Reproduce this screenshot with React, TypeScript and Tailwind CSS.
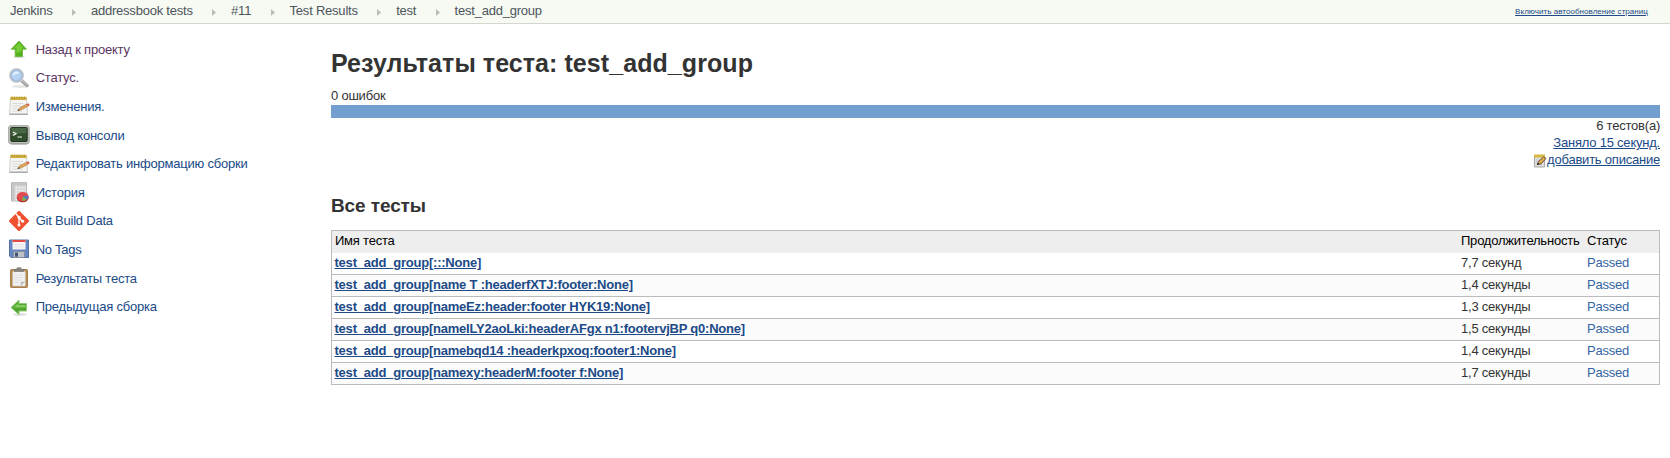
import React from 'react';

const crumbs = ['Jenkins', 'addressbook tests', '#11', 'Test Results', 'test', 'test_add_group'];

function ArrowUp() {
  return (
    <svg width="22" height="22" viewBox="0 0 22 22">
      <ellipse cx="11" cy="19" rx="6" ry="1.2" fill="#ddd" />
      <path d="M11 3 18.500 11.200H14.500V18.500H7.200V11.200H3.200Z" fill="#55b31f" stroke="#63b236" strokeWidth=".8" />
      <path d="M11 5 15.500 10.200H13.500V13L8.500 15V10.200H6Z" fill="#8bdc47" opacity=".65" />
    </svg>
  );
}

function ArrowLeft() {
  return (
    <svg width="22" height="22" viewBox="0 0 22 22">
      <ellipse cx="12" cy="18.500" rx="7" ry="1.300" fill="#ddd" />
      <path d="M3 11.500 11 4V7.500H18.500V15H11V18.500Z" fill="#4fa52f" stroke="#8fca73" />
      <path d="M5.500 11.500 10.300 7V9H17.500V11.500Z" fill="#84ce5d" />
    </svg>
  );
}

function Search() {
  return (
    <svg width="22" height="22" viewBox="0 0 22 22">
      <ellipse cx="12" cy="19.500" rx="8" ry="1.500" fill="#e6e6e6" />
      <path d="m13.500 13.500 5.500 5" stroke="#a5a5a5" strokeWidth="3.600" strokeLinecap="round" />
      <path d="m14 13 5 4.500" stroke="#ccc" strokeWidth="1" strokeLinecap="round" />
      <circle cx="8.500" cy="8.500" r="6.500" fill="#b3d0f3" stroke="#c6cace" strokeWidth="2" />
      <circle cx="8.500" cy="8.500" r="5.500" fill="none" stroke="#8aa9cf" strokeWidth=".8" />
      <path d="M4.500 9Q5 4.700 9 4.500Q11 5 11.500 6.500Q7 6.500 4.500 9" fill="#e3effc" />
    </svg>
  );
}

function Notepad() {
  return (
    <svg width="22" height="22" viewBox="0 0 22 22">
      <path d="M2.500 3H18.500L19.500 19.500H1.500Z" fill="#f4f4f2" stroke="#c4c4c0" strokeWidth=".8" />
      <path d="M1.500 18.500H19.500V20H1.500Z" fill="#aaa" />
      <path d="M2.500 1.800H18.500V5H2.500Z" fill="#cfae3c" />
      <path d="M4 1.500V4M6.500 1.500V4M9 1.500V4M11.500 1.500V4M14 1.500V4M16.500 1.500V4" stroke="#a98d38" strokeWidth=".6" />
      <path d="M4.500 8.500H15M4.500 11H13M4.500 13.500H10M4.500 16H14" stroke="#d3d3d1" strokeWidth=".8" />
      <path d="m10 15.500 1.700-2.800 7.300-3.700 1.300 2-7.300 4Z" fill="#e5a652" stroke="#a98050" strokeWidth=".7" />
      <path d="m18.500 9.200 1.800-.9 1.400 1.700-1.600 1.200Z" fill="#d85b50" />
      <path d="m9.300 16 1.300-2 1.200 1.300Z" fill="#444" />
    </svg>
  );
}

function SmallNotepad() {
  return (
    <svg width="14" height="14" viewBox="0 0 14 14" className="mt-[3px] shrink-0">
      <path d="M1.500 2H11.500V13H1.500Z" fill="#dededc" stroke="#aaa9a3" />
      <path d="M1 .5H12V3.500H1Z" fill="#d8b83e" />
      <path d="M3 6H8M3 8H6M3 10.500H9" stroke="#c5c5c3" />
      <path d="m4.500 10.500 1-3 5-4.500 2.500 1.500-5 5.300Z" fill="#e5ad4e" stroke="#5b4b35" />
      <path d="m4 11 .8-2.300 1.700 1.300Z" fill="#222" />
    </svg>
  );
}

function Terminal() {
  return (
    <svg width="22" height="22" viewBox="0 0 22 22">
      <rect x=".7" y="1.700" width="20.500" height="18" rx="2" fill="#c0c2bc" stroke="#a0a29c" />
      <rect x="2.800" y="3.500" width="16.400" height="14" rx=".8" fill="#304d2c" stroke="#273525" />
      <path d="M3.500 4H18.500V9Q10 9 3.500 12Z" fill="#53704b" opacity=".7" />
      <path d="m5 8 3 1.700-3 1.700M9.500 13H14" stroke="#eef5e9" strokeWidth="1.200" fill="none" />
      <path d="M3 20H19" stroke="#999" />
    </svg>
  );
}

function History() {
  return (
    <svg width="22" height="22" viewBox="0 0 22 22">
      <path d="M3.500 1.700H18.500V20H3.500Z" fill="#eee" stroke="#b5b5b5" />
      <path d="M4 2H18V4.500H4ZM4 2H6.500V19.500H4Z" fill="#c7c7c7" />
      <path d="M4 5H18M4 8H18M4 11H18M4 14H18M4 17H18M7 2V19.500M10 2V19.500M13 2V19.500M16 2V19.500" stroke="#c2c2c2" strokeWidth=".6" />
      <ellipse cx="14.700" cy="16.600" rx="6" ry="4.700" fill="#b92828" />
      <ellipse cx="14.700" cy="15.500" rx="5.800" ry="4.500" fill="#e24b4b" />
      <path d="M14.700 15.500 20.300 14.500Q21 17 18.500 18.800Z" fill="#4b7fc4" />
      <path d="M14.700 15.500 18.500 18.800Q16.500 20.400 14.200 19.800Z" fill="#6fbb48" />
    </svg>
  );
}

function Git() {
  return (
    <svg width="22" height="22" viewBox="0 0 22 22">
      <rect x="3.500" y="3.500" width="15" height="15" rx="1.200" transform="rotate(45 11 11)" fill="#f05133" />
      <path d="M7.700 3.500 11 7.300V15M11 7.800 14.500 11.300" stroke="#fff" strokeWidth="1.300" fill="none" />
      <circle cx="11" cy="7.300" r="1.500" fill="#fff" />
      <circle cx="11" cy="15" r="1.500" fill="#fff" />
      <circle cx="14.700" cy="11.300" r="1.500" fill="#fff" />
    </svg>
  );
}

function Floppy() {
  return (
    <svg width="22" height="22" viewBox="0 0 22 22">
      <path d="M1.500 2H20.500V19.500H3L1.500 18Z" fill="#6587c2" stroke="#56739f" />
      <path d="M4.500 2H17.500V11.500H4.500Z" fill="#f5f5f5" />
      <path d="M4.500 2H17.500V4H4.500Z" fill="#e34a42" />
      <path d="M6 6.500H16M6 8.800H16" stroke="#dedede" strokeWidth=".8" />
      <path d="M5.500 13.500H16.500V19.500H5.500Z" fill="#bfc2c7" stroke="#7c8796" strokeWidth=".7" />
      <path d="M7 14.500H10V18.700H7Z" fill="#46577a" />
    </svg>
  );
}

function Clipboard() {
  return (
    <svg width="22" height="22" viewBox="0 0 22 22">
      <rect x="2.500" y="2.500" width="17" height="18" rx="1" fill="#b98a4b" stroke="#95703a" strokeWidth=".8" />
      <path d="M4.700 4.500H17.300V19H4.700Z" fill="#f1f1f1" stroke="#ccc" strokeWidth=".6" />
      <path d="M6.500 8H15M6.500 10.500H15M6.500 13H14M6.500 15.500H11" stroke="#dadada" strokeWidth=".8" />
      <path d="M17.300 14.500 12.800 19V15Z" fill="#bbb" />
      <path d="M6.500 4.500V2.500L9 2V.8H13V2L15.500 2.500V4.500Z" fill="#85857e" stroke="#75756f" strokeWidth=".6" />
    </svg>
  );
}

const tasks = [
  { label: 'Назад к проекту', icon: <ArrowUp />, color: 'text-[#5c3566]' },
  { label: 'Статус.', icon: <Search />, color: 'text-[#5c3566]' },
  { label: 'Изменения.', icon: <Notepad />, color: 'text-[#204a87]' },
  { label: 'Вывод консоли', icon: <Terminal />, color: 'text-[#204a87]' },
  { label: 'Редактировать информацию сборки', icon: <Notepad />, color: 'text-[#204a87]' },
  { label: 'История', icon: <History />, color: 'text-[#204a87]' },
  { label: 'Git Build Data', icon: <Git />, color: 'text-[#204a87]' },
  { label: 'No Tags', icon: <Floppy />, color: 'text-[#204a87]' },
  { label: 'Результаты теста', icon: <Clipboard />, color: 'text-[#204a87]' },
  { label: 'Предыдущая сборка', icon: <ArrowLeft />, color: 'text-[#204a87]' },
];

const tests = [
  ['test_add_group[:::None]', '7,7 секунд'],
  ['test_add_group[name T :headerfXTJ:footer:None]', '1,4 секунды'],
  ['test_add_group[nameEz:header:footer HYK19:None]', '1,3 секунды'],
  ['test_add_group[nameILY2aoLki:headerAFgx n1:footervjBP q0:None]', '1,5 секунды'],
  ['test_add_group[namebqd14 :headerkpxoq:footer1:None]', '1,4 секунды'],
  ['test_add_group[namexy:headerM:footer f:None]', '1,7 секунды'],
];

export default function App() {
  return (
    <div className="h-[458px] w-[1670px] overflow-hidden bg-white font-['Liberation_Sans',Arial,sans-serif] text-[13px] leading-[17px] tracking-[-0.22px] text-[#333]">
      <header className="flex h-6 items-center justify-between border-b border-[#d3d7cf] bg-[#f6faf2] pl-[10px] pr-[22px]">
        <nav className="flex h-[22px] items-center pb-[2px] text-[#4d545d]">
          {crumbs.map((c, i) => (
            <React.Fragment key={c}>
              {i > 0 && (
                <span className="flex w-[38.4px] justify-center pl-[5px] pt-[3px]">
                  <svg width="4" height="7" viewBox="0 0 4 7"><path d="M0 0 4 3.500 0 7Z" fill="#babdb6" /></svg>
                </span>
              )}
              <a>{c}</a>
            </React.Fragment>
          ))}
        </nav>
        <a className="text-[8px] leading-[10px] tracking-[0.05px] text-[#204a87] underline">Включить автообновление страниц</a>
      </header>
      <div className="flex">
        <aside className="flex w-[331px] flex-col pl-2 pt-[11px]">
          {tasks.map((t) => (
            <div key={t.label} className="flex h-[28.6px] items-center gap-[5.7px]">
              {t.icon}
              <a className={t.color}>{t.label}</a>
            </div>
          ))}
        </aside>
        <main className="flex w-[1329px] flex-col pt-[24px]">
          <h1 className="h-[39px] text-[25px] font-bold leading-[30px] tracking-[0.07px]">Результаты теста: test_add_group</h1>
          <div className="h-[18px]">0 ошибок</div>
          <div className="h-[13px] bg-[#729fcf]" />
          <div className="-mt-px flex h-[52px] flex-col items-end">
            <div>6 тестов(а)</div>
            <a className="text-[#204a87] underline">Заняло 15 секунд.</a>
            <div className="flex items-center">
              <SmallNotepad />
              <a className="text-[#204a87] underline">добавить описание</a>
            </div>
          </div>
          <h2 className="mt-[25px] h-[36px] text-[19px] font-bold leading-[24px] tracking-[-0.1px]">Все тесты</h2>
          <div className="flex flex-col border border-[#bbb]">
            <div className="flex h-[22px] bg-[#eee] pt-px text-black">
              <span className="w-[1129px] pl-[3px]">Имя теста</span>
              <span className="w-[126px]">Продолжительность</span>
              <span>Статус</span>
            </div>
            {tests.map(([name, time], i) => (
              <div key={name} className={'flex pt-px ' + (i === 0 ? 'h-[21px]' : 'h-[22px] border-t border-[#bbb]') + (i % 2 ? ' bg-[#fbfbfb]' : ' bg-white')}>
                <span className="w-[1129px] pl-[2.500px]"><a className="font-bold text-[#204a87] underline">{name}</a></span>
                <span className="w-[126px]">{time}</span>
                <span className="text-[#3465a4]">Passed</span>
              </div>
            ))}
          </div>
        </main>
      </div>
    </div>
  );
}
